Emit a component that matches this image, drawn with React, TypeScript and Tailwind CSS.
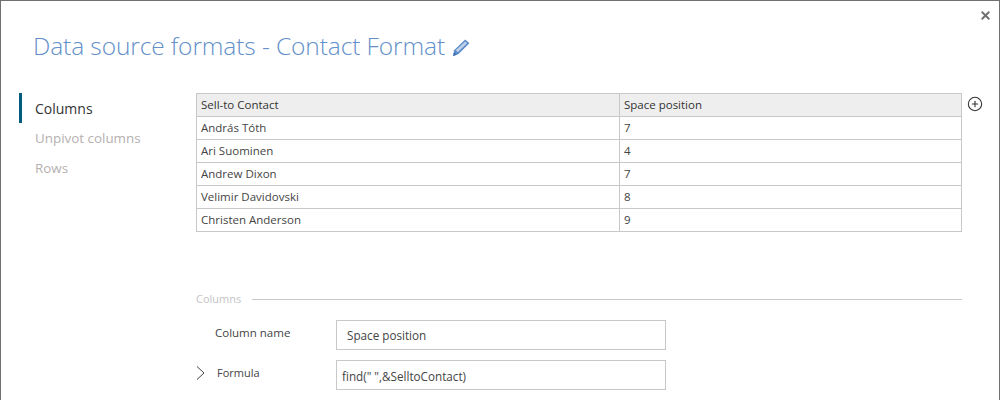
import { X, CirclePlus } from "lucide-react";

const rows = [
  ["András Tóth", "7"],
  ["Ari Suominen", "4"],
  ["Andrew Dixon", "7"],
  ["Velimir Davidovski", "8"],
  ["Christen Anderson", "9"],
];

function Pencil() {
  return (
    <svg width="19" height="19" viewBox="0 0 18 18" className="ml-[7px] mt-[3px]">
      <path d="M1 17 L2 11.5 L12.5 1.5 L16.5 5 L6 15.5 Z" fill="#5b8bc9" />
      <path d="M3.5 11.5 L12.5 3.2 L14.3 5 L5.5 13.6 Z" fill="#ffffff" opacity="0.6" />
      <path d="M1 17 L2 13.5 L4.5 15.8 Z" fill="#3f6fae" />
    </svg>
  );
}

export default function App() {
  return (
    <div className="relative flex h-[400px] w-[1000px] flex-col overflow-hidden border-x border-t border-[#707070] bg-white font-['Open_Sans',sans-serif] text-[#333]">
      <button className="absolute right-[7px] top-[8px] text-[#707070]">
        <X size={13} strokeWidth={3.5} />
      </button>

      <div className="ml-[32px] mt-[27px] flex h-[36px] items-center">
        <h1 className="text-[24.5px] leading-[36px] font-light tracking-[-0.1px] whitespace-nowrap text-[#6390c9]">
          Data source formats - Contact Format
        </h1>
        <Pencil />
      </div>

      <div className="mt-[29px] flex">
        <nav className="w-[195px] shrink-0 pl-[18px] text-[13.4px]">
          <div className="flex h-[30px] items-center border-l-[3px] border-[#005b7f] pl-[13px] text-[14px] text-[#333]">Columns</div>
          <div className="flex h-[30px] items-center pl-[16px] text-[#b5b0b0]">Unpivot columns</div>
          <div className="flex h-[30px] items-center pl-[16px] text-[#b5b0b0]">Rows</div>
        </nav>

        <div className="w-[790px] shrink-0">
          <div className="flex items-start">
            <table className="w-[766px] table-fixed border-collapse text-[11.5px] text-[#444]">
              <thead>
                <tr className="h-[23px] bg-[#eeeeee]">
                  <th className="w-[423px] border border-[#c8c8c8] px-[4px] text-left font-normal text-[#333]">Sell-to Contact</th>
                  <th className="border border-[#c8c8c8] px-[4px] text-left font-normal text-[#333]">Space position</th>
                </tr>
              </thead>
              <tbody>
                {rows.map((r) => (
                  <tr key={r[0]} className="h-[23px]">
                    <td className="border border-[#c8c8c8] px-[4px]">{r[0]}</td>
                    <td className="border border-[#c8c8c8] px-[4px]">{r[1]}</td>
                  </tr>
                ))}
              </tbody>
            </table>
            <CirclePlus size={16} strokeWidth={1.6} className="ml-[5px] mt-[3px] text-[#333]" />
          </div>

          <div className="mt-[60px] flex h-[14px] items-center">
            <span className="text-[11px] text-[#c4c4c4]">Columns</span>
            <div className="ml-[11px] h-px w-[710px] bg-[#c8c8c8]" />
          </div>

          <div className="mt-[14px] flex h-[30px]">
            <label className="ml-[19px] w-[121px] pt-[4px] text-[11.5px] text-[#444]">Column name</label>
            <div className="flex h-[30px] w-[330px] items-center border border-[#c8c8c8] pl-[10px] pt-[2px] text-[11.7px] text-[#444]">
              Space position
            </div>
          </div>

          <div className="mt-[10px] flex h-[30px]">
            <svg width="9" height="14" viewBox="0 0 9 14" className="mt-[6px] shrink-0 text-[#444]">
              <path d="M1 0.5 L8 7 L1 13.5" fill="none" stroke="currentColor" strokeWidth="1" />
            </svg>
            <label className="ml-[12px] w-[119px] pt-[5px] text-[11px] text-[#444]">Formula</label>
            <div className="flex h-[30px] w-[330px] items-center border border-[#c8c8c8] pl-[5px] pt-[3px] text-[11.7px] text-[#444]">
              find(" ",&amp;SelltoContact)
            </div>
          </div>
        </div>
      </div>
    </div>
  );
}
